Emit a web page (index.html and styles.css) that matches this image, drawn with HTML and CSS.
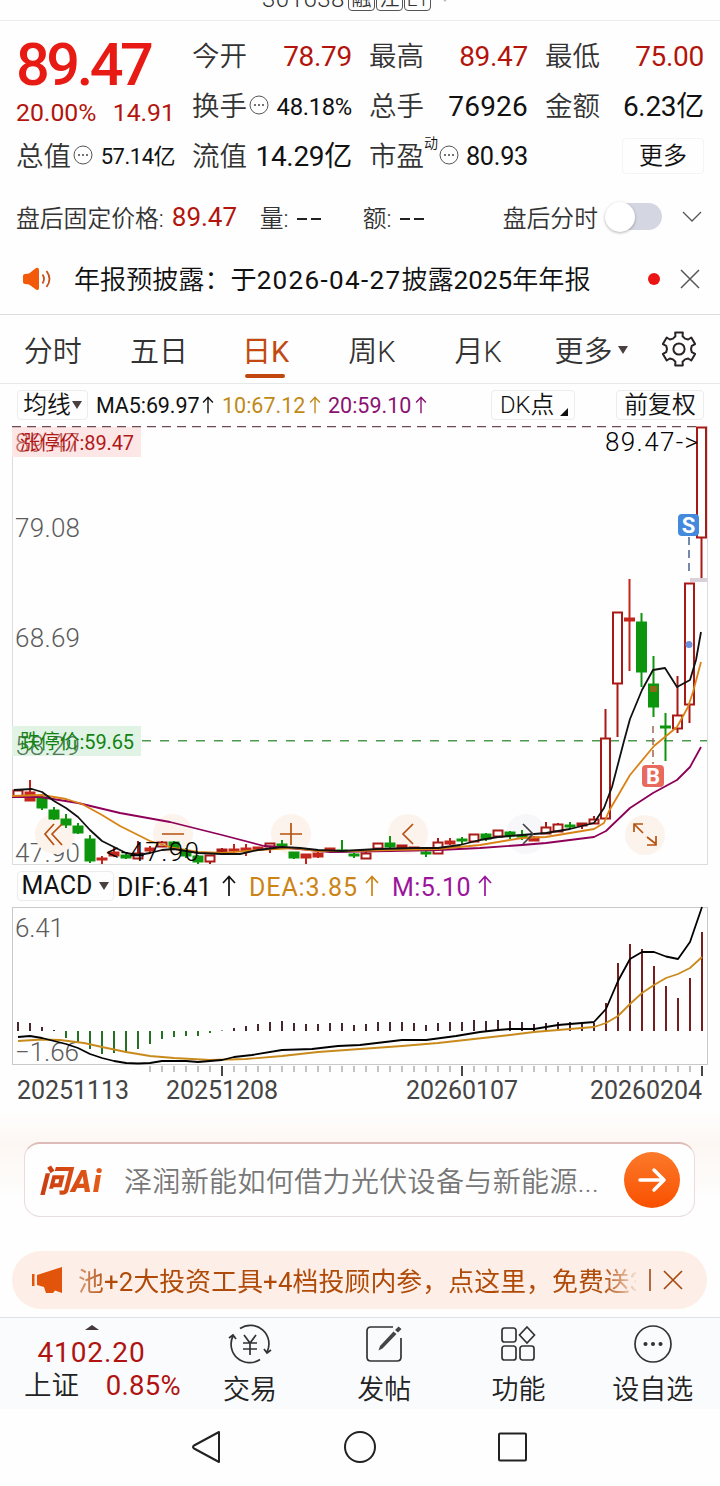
FILE: index.html
```
<!DOCTYPE html>
<html lang="zh-CN">
<head>
  <meta charset="UTF-8">
  <meta name="viewport" content="width=device-width, initial-scale=1.0">
  <title>301638 日K</title>
  <link rel="stylesheet" href="styles.css">
</head>
<body>
  <!-- 顶部代码 -->
  <header class="top-strip">
    <span class="code">301638</span>
    <span class="chip">融</span><span class="chip">江</span><span class="chip">L1</span>
    <i class="tri tri-title"></i>
  </header>

  <!-- 行情 -->
  <section class="quote">
    <div class="col main">
      <div class="price">89.47</div>
      <div class="row change"><span>20.00%</span><span>14.91</span></div>
      <div class="row"><label>总值</label><svg class="dots"><use href="#dots"/></svg><b class="small">57.14亿</b></div>
    </div>
    <div class="col">
      <div class="row"><label>今开</label><b class="red">78.79</b></div>
      <div class="row"><label>换手</label><svg class="dots"><use href="#dots"/></svg><b class="mid">48.18%</b></div>
      <div class="row"><label>流值</label><b>14.29亿</b></div>
    </div>
    <div class="col">
      <div class="row"><label>最高</label><b class="red">89.47</b></div>
      <div class="row"><label>总手</label><b class="wide">76926</b></div>
      <div class="row"><label>市盈</label><sup>动</sup><svg class="dots"><use href="#dots"/></svg><b class="pe">80.93</b></div>
    </div>
    <div class="col">
      <div class="row"><label>最低</label><b class="red">75.00</b></div>
      <div class="row"><label>金额</label><b>6.23亿</b></div>
      <div class="row"><button class="more">更多</button></div>
    </div>
  </section>

  <section class="after">
    <span>盘后固定价格:</span><b class="red">89.47</b>
    <span class="vol">量:</span><i class="dash"></i><i class="dash"></i>
    <span class="amt">额:</span><i class="dash"></i><i class="dash"></i>
    <span class="switch-label">盘后分时</span>
    <div class="switch"></div>
    <svg class="chevron" viewBox="0 0 20 12"><path d="M1 1 L10 10 L19 1"/></svg>
  </section>

  <section class="notice">
    <svg class="speaker" viewBox="0 0 30 24">
      <path class="fill" d="M1 9 Q1 7 3 7 L7 6.500 L14 1 Q17 0 17 3 V21 Q17 24 14 22.500 L7 17.500 L3 17 Q1 17 1 15 Z"/>
      <path d="M20.500 7.500 Q23.500 12 20.500 16.500 M24.500 4 Q30.500 12 24.500 20"/>
    </svg>
    <p>年报预披露：<span>于</span><span class="num">2026-04-27</span>披露<span>2025</span>年年报</p>
    <i class="red-dot"></i>
    <svg class="close" viewBox="0 0 20 20"><path d="M1 1 L19 19 M19 1 L1 19"/></svg>
  </section>

  <nav class="tabs">
    <a>分时</a><a>五日</a><a class="active">日K</a><a>周K</a><a>月K</a>
    <a>更多<i class="tri"></i></a>
    <svg viewBox="-18 -18 36 36"><path id="gear"/><circle r="5.600"/></svg>
  </nav>

  <section class="ma-row">
    <button class="ma-btn">均线<i class="tri"></i></button>
    <span class="ma5">MA5:69.97</span><svg class="arrow ma5"><use href="#arrow"/></svg>
    <span class="ma10">10:67.12</span><svg class="arrow ma10"><use href="#arrow"/></svg>
    <span class="ma20">20:59.10</span><svg class="arrow ma20"><use href="#arrow"/></svg>
    <button class="dk">DK点<i></i></button>
    <button class="fq">前复权</button>
  </section>

  <!-- K线图 -->
  <svg class="kline" id="kline" viewBox="0 426 720 440">
    <path class="frame" d="M12.500 426 V864.500 H707.500 V426"/>
    <rect x="12" y="427" width="129" height="30" fill="#fde6e6"/>
    <rect x="12" y="726" width="129" height="30" fill="#e0f3e5"/>
    <path class="limit-up" d="M12 426.700 H697"/>
    <path class="limit-down" d="M142 740.700 H707"/>
    <g class="axis">
      <text class="over-up" x="15" y="451.500" textLength="65">89.47</text>
      <text x="15" y="536.500" textLength="65">79.08</text>
      <text x="15" y="646.500" textLength="65">68.69</text>
      <text class="over-down" x="15" y="755" textLength="65">58.29</text>
      <text x="15" y="861.500" textLength="65">47.90</text>
    </g>
    <g class="limit-text">
      <text x="20" y="449.500" textLength="114" fill="#b01818">涨停价:89.47</text>
      <text x="20" y="748.500" textLength="114" fill="#128312">跌停价:59.65</text>
    </g>
    <g class="float-btns">
      <circle cx="55" cy="834" r="20"/><circle cx="173" cy="834" r="20"/><circle cx="291" cy="834" r="20"/>
      <circle cx="408" cy="834" r="20"/><circle cx="526" cy="834" r="20" class="off"/><circle cx="645" cy="835" r="20"/>
    </g>
    <g id="candles"></g>
    <g id="ma"></g>
    <rect x="690" y="578" width="17" height="4" fill="#d9d0da"/>
    <rect x="650" y="686" width="7" height="6" fill="#8a6a18"/>
    <circle cx="689" cy="644.500" r="3.500" fill="#6d92dc"/>
    <path d="M689 537 V575" stroke="#4a628c" stroke-width="1.500" stroke-dasharray="8 5"/>
    <path d="M653 726 V764" stroke="#a5664d" stroke-width="1.500" stroke-dasharray="7 5"/>
    <g class="float-icons">
      <path d="M54 824 L45 834 L54 845 M62 824 L52 834 L62 845 M162 834 H184 M280 834 H302 M291 823 V845 M413 824 L403 834 L413 844"/>
      <path d="M523 824 L533 834 L523 844"/>
      <path d="M634 832 V824 H643 M634 824 L643 833 M647 837 L656 844 M647 845 H656 V836" stroke-width="2"/>
    </g>
    <g class="mark-text">
      <text x="605" y="450.500" textLength="93">89.47-&gt;</text>
      <text x="106" y="861" textLength="93">&lt;-47.90</text>
    </g>
    <rect x="678" y="514" width="21" height="22" rx="4" fill="#4389dc"/>
    <text class="badge" x="688.500" y="533">S</text>
    <rect x="642" y="765" width="22" height="22" rx="4" fill="#e8695e"/>
    <text class="badge" x="653" y="784">B</text>
  </svg>

  <section class="macd-row">
    <button class="macd-btn">MACD<i class="tri"></i></button>
    <span class="dif">DIF:6.41</span><svg class="arrow"><use href="#arrow"/></svg>
    <span class="dea">DEA:3.85</span><svg class="arrow dea"><use href="#arrow"/></svg>
    <span class="m">M:5.10</span><svg class="arrow m"><use href="#arrow"/></svg>
  </section>

  <svg class="macd" viewBox="0 906 720 204">
    <rect class="frame" x="12.500" y="907.500" width="695" height="157"/>
    <g class="axis">
      <text x="15" y="936.500" textLength="49">6.41</text>
      <text x="15" y="1061" textLength="64">−1.66</text>
    </g>
    <g id="bars"></g>
    <g id="lines"></g>
    <g id="ticks"></g>
    <g class="dates">
      <text x="17" y="1099" textLength="112">20251113</text>
      <text x="166" y="1099" textLength="112">20251208</text>
      <text x="406" y="1099" textLength="112">20260107</text>
      <text x="590" y="1099" textLength="112">20260204</text>
    </g>
  </svg>

  <!-- 问AI -->
  <section class="ask">
    <div class="ask-box">
      <span class="logo">问Ai</span>
      <span class="question">泽润新能如何借力光伏设备与新能源...</span>
      <svg class="go" viewBox="0 0 56 56"><path d="M16 28 H40 M30 18 L40 28 L30 38"/></svg>
    </div>
  </section>

  <section class="promo">
    <svg class="horn" viewBox="0 0 32 28"><path d="M1 8 H3.500 V20 H1 Z M6 9 L31 1 V27 L24 24.500 L22 27 H15 L13 21 L6 19 Z"/></svg>
    <p>池+2大投资工具+4档投顾内参，点这里，免费送3</p>
    <i class="sep"></i>
    <svg class="close" viewBox="0 0 20 20"><path d="M1 1 L19 19 M19 1 L1 19"/></svg>
  </section>

  <footer class="bottom-bar">
    <div class="index">
      <i class="tri-up"></i>
      <div class="points">4102.20</div>
      <div class="pct"><span>上证</span><b>0.85%</b></div>
    </div>
    <a>
      <svg viewBox="-22 -20 44 40"><path d="M-10 -15.500 A18.500 18.500 0 0 1 17 8 M10 15.500 A18.500 18.500 0 0 1 -17 -8 M-21 -6 L-17 -9 L-14 -5 M21 6 L17 9 L14 5"/><path d="M-6 -9 L0 -1 L6 -9 M0 -1 V11 M-7 -1 H7 M-7 5 H7"/></svg>
      交易
    </a>
    <a>
      <svg viewBox="-22 -20 44 40"><path d="M9 -17 H-13 Q-17 -17 -17 -13 V13 Q-17 17 -13 17 H13 Q17 17 17 13 V-6"/><path class="pen" d="M-5.500 6.500 L-4 2 L9.500 -12.500 L12.500 -10 L-1.500 4.500 Z M11 -14 L14.500 -17.500 L17.500 -15 L14 -11.500 Z"/></svg>
      发帖
    </a>
    <a>
      <svg viewBox="-22 -20 44 40"><rect x="-16" y="-16" width="14" height="14" rx="2.500"/><path d="M9 -17 L16.500 -9 L9 -1 L1.500 -9 Z"/><rect x="-16" y="2" width="14" height="14" rx="2.500"/><rect x="2" y="2" width="14" height="14" rx="2.500"/></svg>
      功能
    </a>
    <a>
      <svg viewBox="-22 -20 44 40"><circle r="18"/><g fill="#333"><circle cx="-7.500" r="1.200"/><circle r="1.200"/><circle cx="7.500" r="1.200"/></g></svg>
      设自选
    </a>
  </footer>

  <div class="sys-nav">
    <svg viewBox="0 0 34 36"><path d="M29 3 V33 L4 19.500 Q2 18 4 16.500 Z"/></svg>
    <svg viewBox="0 0 34 36"><circle cx="17" cy="18" r="15"/></svg>
    <svg viewBox="0 0 34 36"><rect x="3" y="4.500" width="27" height="27" rx="1"/></svg>
  </div>

  <svg class="defs">
    <symbol id="dots" viewBox="0 0 20 20">
      <circle cx="10" cy="10" r="9" fill="none" stroke="#555" stroke-width="1"/>
      <circle cx="6" cy="10" r="1" fill="#444"/><circle cx="10" cy="10" r="1" fill="#444"/><circle cx="14" cy="10" r="1" fill="#444"/>
    </symbol>
    <symbol id="arrow" viewBox="0 0 14 22">
      <path d="M7 21 V2 M1 8 L7 1.500 L13 8" fill="none" stroke="currentColor" stroke-width="1.700"/>
    </symbol>
  </svg>

  <script>
    const STEP = 12;
    const X0 = 18;

    // [类型, 实体上, 实体下, 影线上, 影线下]  r 空心阳线, f 实心红, g 阴线
    const candles = [
      ['r',790,797,789,797],['f',792,801,780,801],['g',797,808,795,810],['g',810,819,807,820],
      ['g',819,825,814,828],['g',826,833,823,834],['g',839,861,835,863],['f',858,860,856,864],
      ['f',852,856,847,857],['g',855,858,854,859],['r',853,859,841,859],['f',848,851,846,854],
      ['r',842,847,841,847],['g',842,848,841,849],['g',851,856,848,858],['g',856,862,855,864],
      ['r',855,862,855,864],['r',849,852,848,852],['f',849,851,844,854],['f',848,851,844,856],
      ['f',847,850,847,850],['r',843,847,843,853],['g',844,846,840,847],['g',852,858,852,859],
      ['f',854,858,854,864],['f',853,857,851,858],['f',848,850,848,850],['g',850,851,840,852],
      ['g',854,856,853,858],['r',853,859,849,859],['r',843,849,843,849],['g',843,847,836,848],
      ['r',845,848,845,848],['f',847,849,847,849],['g',852,854,851,857],['r',842,854,838,854],
      ['f',841,844,838,845],['g',839,841,837,844],['r',834,842,834,842],['g',834,839,833,841],
      ['r',830,837,830,837],['g',832,836,831,839],['g',835,836,830,840],['f',837,841,836,841],
      ['r',827,834,822,834],['r',824,832,823,832],['g',825,826,822,829],['r',823,826,823,829],
      ['r',819,824,816,824],['r',738,819,709,819],['r',612,684,612,737],['f',618,621,579,671],
      ['g',622,672,613,687],['g',684,707,656,717],['g',726,728,713,761],['r',715,729,676,733],
      ['r',583,705,583,723],['r',427,538,427,578]
    ];

    const ma5 = '14,790 32,789 42,792 54,801 66,808 78,817 90,830 102,841 114,847 126,853 138,855 150,853 162,850 174,849 186,851 198,853 222,854 240,854 258,850 282,847 300,848 318,850 342,851 378,849 414,848 438,848 460,845 480,840 498,837 522,835 546,833 570,829 594,823 604,808 612,787 624,741 630,719 642,690 653,670 665,668 677,687 690,680 696,660 701,632';
    const ma10 = '12,796 42,795 66,799 82,804 102,815 120,826 150,841 174,848 198,852 222,853 258,850 294,848 318,851 354,851 390,850 438,849 480,845 522,838 546,837 594,829 604,823 609,811 630,775 654,746 677,727 688,707 693,692 701,662';
    const ma20 = '12,797 40,797 78,803 120,813 170,822 222,835 264,846 300,849 330,852 390,851 438,850 480,848 522,845 546,843 594,837 606,831 630,808 653,793 677,780 690,767 701,747';

    const BASE = 1031;
    const hist = [
      9,8,4,1,-7,-11,-18,-23,-22,-21,-18,-13,-8,-6,-5,-5,-2,0.5,3,5,7,9,10,8,7,7,8,8,6,
      7,9,9,9,8,6,8,9,9,11,10,11,10,9,7,8,9,9,9,8,28,68,87,82,65,45,33,53,99
    ];
    const dif = '18,1037 30,1036 42,1038 54,1041 66,1044 78,1048 90,1054 102,1058 114,1061 126,1063 138,1063.5 150,1063 162,1061 186,1061 198,1062 222,1060 234,1057 252,1055 282,1050 312,1049 338,1046 360,1045 402,1040 426,1040 456,1036 480,1032 498,1030 510,1029 534,1029 558,1025 594,1022 606,1009 618,981 630,959 642,952 654,952 666,956.5 678,959 690,942 702,907';
    const dea = '18,1041 42,1039.5 60,1040 84,1043 102,1047 126,1052 150,1056 174,1058 210,1060 246,1059 282,1056 318,1052 360,1049 402,1046 438,1043 474,1039 510,1035 534,1032 558,1030 594,1027 606,1023 618,1016 630,1004 642,993 654,985 666,978 678,974 690,968 702,957';

    function line(points, color) {
      return `<polyline points="${points}" fill="none" stroke="${color}" stroke-width="1.8" stroke-linejoin="round"/>`;
    }

    document.getElementById('candles').innerHTML = candles.map(([type, top, bottom, high, low], i) => {
      const x = X0 + i * STEP - (i > 48 ? 0.5 : 0);
      const color = type === 'g' ? '#0d960d' : (type === 'r' ? '#a91a17' : '#c4261c');
      const fill = type === 'r' ? '#fff' : color;
      return `<path d="M${x} ${high} V${low}" stroke="${color}" stroke-width="2"/>` +
        `<rect x="${x - 4.500}" y="${top + 0.5}" width="9" height="${Math.max(1, bottom - top - 1)}" fill="${fill}" stroke="${color}" stroke-width="2"/>`;
    }).join('');

    document.getElementById('ma').innerHTML = line(ma20, '#8e0058') + line(ma10, '#d98316') + line(ma5, '#111');

    document.getElementById('bars').innerHTML = hist.map((h, i) => {
      const x = X0 + i * STEP;
      const color = h < 0 ? '#1a6b1a' : (i > 48 ? '#6e1414' : '#3d1c22');
      return `<path d="M${x} ${BASE} V${BASE - h}" stroke="${color}" stroke-width="1.9"/>`;
    }).join('');

    document.getElementById('lines').innerHTML = line(dea, '#c98a1c') + line(dif, '#000');

    let ticks = '';
    for (let i = 11; i < 58; i++) {
      const major = i === 17 || i === 37 || i === 57;
      ticks += `<path d="M${X0 + i * STEP} 1066 V${major ? 1076 : 1072}" stroke="${major ? '#333' : '#999'}" stroke-width="${major ? 1.8 : 1.2}"/>`;
    }
    document.getElementById('ticks').innerHTML = ticks;

    // 设置图标, 六齿
    let gear = '';
    for (let k = 0; k < 6; k++) {
      [[-30, 12], [-16, 13.2], [-13, 16.8], [13, 16.8], [16, 13.2]].forEach(([deg, r]) => {
        const a = (k * 60 + deg - 90) * Math.PI / 180;
        gear += (gear ? 'L' : 'M') + (r * Math.cos(a)).toFixed(1) + ' ' + (r * Math.sin(a)).toFixed(1);
      });
    }
    document.getElementById('gear').setAttribute('d', gear + 'Z');
  </script>
</body>
</html>
```

FILE: styles.css
```
* {
  margin: 0;
  padding: 0;
  box-sizing: border-box;
}
body {
  width: 720px;
  height: 1486px;
  overflow: hidden;
  background: #fefefe;
  color: #111;
  font-family: Roboto, "Noto Sans CJK SC", sans-serif;
  font-weight: 350;
}
b, i {
  font-weight: inherit;
  font-style: normal;
}
svg {
  display: block;
  fill: none;
  flex-shrink: 0;
}
button {
  font: inherit;
  color: inherit;
  background: #fefefe;
  border: 1px solid #ececf0;
  border-radius: 4px;
}
.defs {
  display: none;
}
.red {
  color: #b3150c;
}
.tri {
  border: 5px solid transparent;
  border-top: 8px solid #4a4040;
  border-bottom: 0;
}

/* 顶部 */
.top-strip {
  height: 21px;
  padding-left: 262px;
  display: flex;
  align-items: flex-end;
  border-bottom: 1px solid #ebeeee;
  overflow: hidden;
}
.top-strip .code {
  width: 86px;
  font-size: 24px;
  letter-spacing: .5px;
  line-height: 28px;
  margin-bottom: 7px;
  color: #333;
}
.top-strip .chip {
  width: 27px;
  height: 24px;
  margin: 0 1px 9px 0;
  border: 1px solid #555;
  border-radius: 4px;
  font-size: 20px;
  line-height: 22px;
  text-align: center;
  color: #333;
}
.top-strip .tri-title {
  margin: 0 0 18px 9px;
  border-width: 5px 4px 0;
  border-top-color: #bbb;
}

/* 行情 */
.quote {
  height: 160px;
  padding: 11px 16px 0;
  display: grid;
  grid-template-columns: 159px 160px 159px 159px;
  column-gap: 17px;
}
.row {
  height: 50px;
  display: flex;
  align-items: center;
  line-height: 50px;
  font-size: 28px;
}
.row label {
  font-size: 27.5px;
  color: #333;
}
.row b {
  margin-left: auto;
  font-weight: 400;
  letter-spacing: -.3px;
}
.row .wide {
  letter-spacing: .2px;
}
.row .mid {
  font-size: 23.8px;
}
.row .small {
  font-size: 22px;
  letter-spacing: -.5px;
}
.row .pe {
  font-size: 25.3px;
}
.row sup {
  align-self: flex-start;
  margin-top: -14px;
  font-size: 14px;
}
.dots {
  width: 20px;
  height: 20px;
  margin: -5px 0 0 2px;
}
sup + .dots {
  margin-left: 1px;
}
.price {
  height: 62px;
  line-height: 67px;
  font-size: 59.5px;
  font-weight: 500;
  letter-spacing: -3.500px;
  color: #e81b14;
}
.change {
  height: 38px;
  line-height: 42px;
  justify-content: space-between;
  font-size: 24.8px;
  font-weight: 400;
  color: #b3150c;
}
.more {
  width: 82px;
  height: 36px;
  margin: -3px 0 0 auto;
  font-size: 24px;
  line-height: 32px;
  border-color: #f4f4f6;
}

/* 盘后 */
.after {
  height: 71px;
  padding-left: 16px;
  display: flex;
  align-items: center;
  font-size: 23.8px;
  color: #333;
}
.after .red {
  width: 88px;
  margin-left: 8px;
  font-size: 26px;
  font-weight: 400;
}
.dash {
  width: 10px;
  height: 2px;
  margin-top: 4px;
  margin-right: 4px;
  background: #222;
}
.vol, .amt {
  width: 37px;
}
.after .amt {
  margin-left: 38px;
}
.switch-label {
  width: 103px;
  margin-left: 75px;
}
.switch {
  width: 56px;
  height: 27px;
  border-radius: 14px;
  background: #d4d7e2;
}
.switch::before {
  content: "";
  display: block;
  width: 30px;
  height: 30px;
  margin: -1px 0 0 -1px;
  border-radius: 50%;
  background: #fff;
  box-shadow: 0 1px 3px rgba(0, 0, 0, .3);
}
.chevron {
  width: 20px;
  height: 12px;
  margin-left: 20px;
  stroke: #555;
  stroke-width: 1.300;
}

/* 公告 */
.notice {
  height: 63px;
  padding: 0 20px 9px 22px;
  display: flex;
  align-items: center;
  border-bottom: 1px solid #dcdede;
}
.speaker {
  width: 30px;
  height: 24px;
  stroke: #c8501c;
  stroke-width: 1.800;
}
.speaker .fill {
  fill: #f25a0a;
  stroke: none;
}
.notice p {
  width: 570px;
  margin: -2px 0 0 22px;
  font-size: 26.100px;
  white-space: nowrap;
  color: #111;
}
.notice span {
  font-weight: 400;
}
.notice .num {
  letter-spacing: 1.300px;
}
.red-dot {
  width: 12px;
  height: 12px;
  margin-left: 4px;
  border-radius: 50%;
  background: #ea1414;
}
.close {
  width: 20px;
  height: 20px;
  margin-left: auto;
  stroke: #555;
  stroke-width: 1.500;
}

/* 周期 */
.tabs {
  height: 69px;
  display: grid;
  grid-template-columns: repeat(5, 106.400px) 120px 54px;
  align-items: center;
  border-bottom: 1px solid #e6e9e9;
}
.tabs a {
  height: 68px;
  display: flex;
  justify-content: center;
  align-items: center;
  padding: 5px 1px 0 0;
  font-size: 29px;
  line-height: 64px;
  color: #333;
  position: relative;
}
.tabs .active {
  color: #c24a10;
  font-weight: 400;
}
.tabs .active::after {
  content: "";
  position: absolute;
  left: 32px;
  bottom: 5px;
  width: 40px;
  height: 4px;
  border-radius: 2px;
  background: #c2470f;
}
.tabs .tri {
  margin: -4px 0 0 6px;
}
.tabs svg {
  width: 36px;
  height: 36px;
  margin-left: 9px;
  stroke: #2a2226;
  stroke-width: 2;
  stroke-linejoin: round;
}

/* 均线 */
.ma-row {
  height: 42px;
  padding-left: 17px;
  display: flex;
  align-items: center;
  font-size: 21.5px;
}
.ma-row span {
  font-weight: 400;
}
.ma-row button {
  height: 30px;
  font-size: 23.8px;
  line-height: 29px;
  white-space: nowrap;
}
.ma-row .ma-btn {
  width: 71px;
  display: flex;
  align-items: center;
  justify-content: center;
  gap: 1px;
}
.arrow {
  width: 12px;
  height: 18px;
}
span.ma5 {
  width: 106px;
  margin-left: 8px;
  letter-spacing: -.1px;
}
.ma10 {
  color: #c08a18;
}
span.ma10 {
  width: 87px;
  margin-left: 8px;
}
.ma20 {
  color: #8a1272;
}
span.ma20 {
  width: 87px;
  margin-left: 7px;
}
.ma-row .dk {
  width: 84px;
  margin-left: 64px;
  padding-left: 8px;
  text-align: left;
}
.dk i {
  display: inline-block;
  margin-left: 6px;
  border-left: 8px solid transparent;
  border-bottom: 8px solid #111;
  vertical-align: -3px;
}
.ma-row .fq {
  width: 88px;
  margin-left: 41px;
}

/* 图表 */
.kline {
  width: 720px;
  height: 440px;
}
.macd {
  width: 720px;
  height: 204px;
}
.frame {
  stroke: #dcdcdc;
}
.macd .frame {
  stroke: #c9c9c9;
}
.axis text {
  font-size: 26px;
  fill: #5c5c5c;
}
.axis .over-up {
  fill: #c26a64;
}
.axis .over-down {
  fill: #4f7a55;
}
.limit-text text {
  font-size: 20px;
  font-weight: 400;
}
.limit-up {
  stroke: #6f4a52;
  stroke-width: 1.300;
  stroke-dasharray: 9 6;
}
.limit-down {
  stroke: #4e9a4e;
  stroke-width: 1.500;
  stroke-dasharray: 9 9;
}
.float-btns circle {
  fill: #fdf3ed;
}
.float-btns .off {
  fill: #f7f7f9;
}
.float-icons path {
  stroke: #b5520f;
  stroke-width: 1.700;
}
.float-icons path:nth-child(2) {
  stroke: #444;
}
.mark-text text {
  font-size: 26px;
  fill: #000;
}
.badge {
  font-size: 22px;
  font-weight: 700;
  fill: #fff;
  text-anchor: middle;
}
.dates text {
  font-size: 25px;
  font-weight: 400;
  fill: #444;
}

.macd-row {
  height: 40px;
  padding-left: 17px;
  display: flex;
  align-items: center;
  font-size: 25px;
  font-weight: 400;
  letter-spacing: .4px;
}
.macd-row span {
  margin-top: 2px;
}
.macd-btn {
  width: 97px;
  height: 30px;
  display: flex;
  align-items: center;
  justify-content: center;
  gap: 7px;
  line-height: 30px;
  letter-spacing: 0;
}
.macd-row .arrow {
  width: 14px;
  height: 22px;
}
.dea {
  color: #cb8415;
}
.m {
  color: #9c149c;
}
span.dif {
  width: 105px;
  margin-left: 3px;
}
span.dea {
  width: 116px;
  margin-left: 13px;
  letter-spacing: .900px;
}
span.m {
  width: 86px;
  margin-left: 13px;
}

/* 问AI */
.ask {
  height: 141px;
  padding: 32px 25px 0 24px;
  background: linear-gradient(#fefefe, #fdf7f3 35px, #fdfaf8 60px, #fefefe 90px);
}
.ask-box {
  height: 75px;
  padding: 0 14px 0 14px;
  display: flex;
  align-items: center;
  border: 1px solid #e8dcdc;
  border-top: 2px solid #dcbcb8;
  border-radius: 16px;
  background: #fefefe;
}
.logo {
  width: 85px;
  margin-top: -4px;
  font-size: 31px;
  font-weight: 900;
  font-style: italic;
  letter-spacing: 1.200px;
  background: linear-gradient(90deg, #c83c10, #f0661c);
  -webkit-background-clip: text;
  color: transparent;
}
.question {
  font-size: 28px;
  letter-spacing: .36px;
  white-space: nowrap;
  color: #777;
}
.go {
  width: 56px;
  height: 56px;
  margin-left: auto;
  border-radius: 50%;
  background: linear-gradient(#fb7a2a, #f95000);
  stroke: #fff;
  stroke-width: 3.500;
  stroke-linecap: round;
  stroke-linejoin: round;
}

.promo {
  height: 58px;
  margin: 0 13px 8px 12px;
  padding: 0 24px 0 19px;
  display: flex;
  align-items: center;
  border-radius: 29px;
  background: #fdefe7;
  color: #b04a08;
}
.horn {
  width: 32px;
  height: 28px;
  fill: #e2540c;
}
.promo p {
  width: 558px;
  margin: -2px 0 0 15px;
  font-size: 25.800px;
  font-weight: 400;
  letter-spacing: .15px;
  white-space: nowrap;
  overflow: hidden;
  -webkit-mask-image: linear-gradient(90deg, rgba(0, 0, 0, .5), #000 30px, #000 525px, rgba(0, 0, 0, .15) 556px);
}
.sep {
  width: 2px;
  height: 22px;
  margin-left: 13px;
  background: #b56a40;
}
.promo .close {
  stroke: #a84810;
  stroke-width: 1.700;
}

/* 底部 */
.bottom-bar {
  height: 92px;
  display: grid;
  grid-template-columns: 183px repeat(4, 134.200px);
  border-top: 1px solid #dfe1e2;
  background: #fafbfd;
}
.bottom-bar a {
  padding-top: 6px;
  display: flex;
  flex-direction: column;
  align-items: center;
  font-size: 27px;
  line-height: 52px;
  color: #222;
}
.bottom-bar svg {
  width: 44px;
  height: 40px;
  stroke: #333;
  stroke-width: 1.700;
}
.bottom-bar .pen {
  fill: #444;
  stroke: none;
}
.index {
  display: flex;
  flex-direction: column;
  align-items: center;
  font-size: 27.500px;
  color: #b01410;
}
.tri-up {
  margin-top: 7px;
  border: 7px solid transparent;
  border-bottom: 5px solid #443a3a;
  border-top: 0;
}
.points {
  margin-top: 6px;
  line-height: 34px;
  font-size: 28px;
  font-weight: 400;
  letter-spacing: .9px;
}
.pct {
  width: 157px;
  margin-left: 22px;
  display: flex;
  justify-content: space-between;
  line-height: 32px;
}
.pct span {
  color: #222;
}
.pct b {
  font-weight: 400;
  letter-spacing: .3px;
}
.sys-nav {
  height: 76px;
  padding: 0 130px;
  display: grid;
  grid-template-columns: repeat(3, 153px);
  justify-items: center;
  align-items: center;
}
.sys-nav svg {
  width: 34px;
  height: 36px;
  stroke: #222;
  stroke-width: 2;
  stroke-linejoin: round;
}
```
